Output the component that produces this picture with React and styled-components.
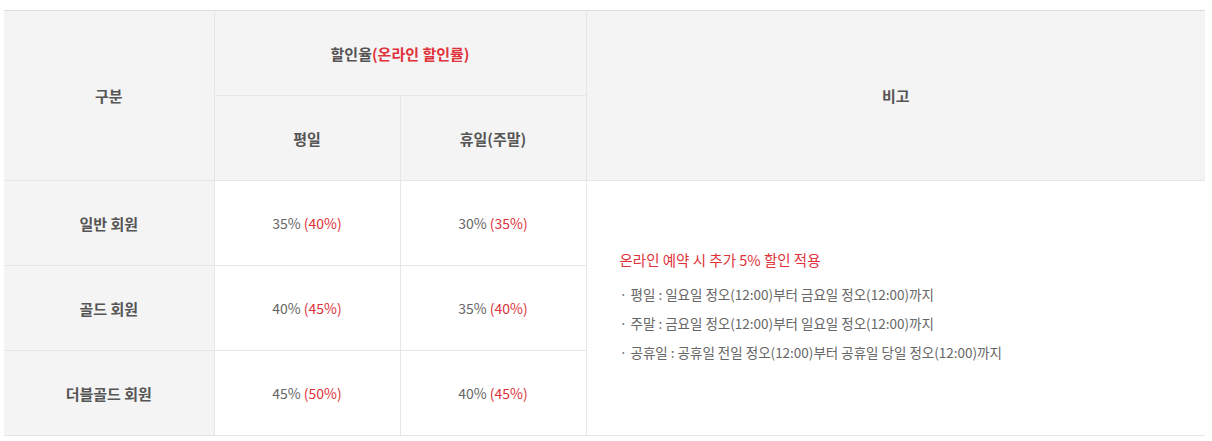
import React from 'react';
import styled, { createGlobalStyle } from 'styled-components';

const BORDER = '#e6e6e6';
const HEAD_BG = '#f4f4f4';
const RED = '#e0323a';
const ROW_HEIGHT = 85;

const GlobalStyle = createGlobalStyle`
  body {
    margin: 0;
    background: #fff;
    font-family: "Noto Sans CJK KR", "Noto Sans", sans-serif;
    color: #666;
  }
`;

const Wrap = styled.div`
  padding: 10px 7px 0 4px;
`;

const Table = styled.table`
  width: 100%;
  border-collapse: collapse;
  table-layout: fixed;
  border-top: 1px solid #dcdcdc;
  border-bottom: 1px solid ${BORDER};
`;

const Th = styled.th`
  height: ${ROW_HEIGHT - 1}px;
  padding: 0;
  background: ${HEAD_BG};
  border: 1px solid ${BORDER};
  border-top: 0;
  font-size: 15px;
  font-weight: 700;
  color: #555;
  text-align: center;
  vertical-align: middle;
  &:first-child { border-left: 0; }
  &:last-child { border-right: 0; }
`;

const Td = styled.td`
  height: ${ROW_HEIGHT - 1}px;
  padding: 0;
  border: 1px solid ${BORDER};
  background: ${(p) => (p.$head ? HEAD_BG : '#fff')};
  font-size: ${(p) => (p.$head ? 15 : 14)}px;
  font-weight: ${(p) => (p.$head ? 700 : 400)};
  color: ${(p) => (p.$head ? '#555' : '#666')};
  text-align: center;
  vertical-align: middle;
  &:first-child { border-left: 0; }
  &:last-child { border-right: 0; }
`;

const NoteCell = styled.td`
  padding: 0 0 0 33px;
  border: 1px solid ${BORDER};
  border-right: 0;
  text-align: left;
  vertical-align: middle;
`;

const Red = styled.span`
  color: ${RED};
`;

const NoteTitle = styled.p`
  margin: 0 0 10px;
  font-size: 14.5px;
  color: ${RED};
`;

const NoteList = styled.ul`
  list-style: none;
  margin: 0;
  padding: 0;
`;

const NoteItem = styled.li`
  position: relative;
  padding-left: 11px;
  font-size: 13.5px;
  line-height: 29px;
  color: #666;
  &::before {
    content: '·';
    position: absolute;
    left: 0;
    top: 0;
    color: #777;
  }
`;

const rows = [
  { name: '일반 회원', weekday: ['35%', '40%'], holiday: ['30%', '35%'] },
  { name: '골드 회원', weekday: ['40%', '45%'], holiday: ['35%', '40%'] },
  { name: '더블골드 회원', weekday: ['45%', '50%'], holiday: ['40%', '45%'] },
];

const notes = [
  '평일 : 일요일 정오(12:00)부터 금요일 정오(12:00)까지',
  '주말 : 금요일 정오(12:00)부터 일요일 정오(12:00)까지',
  '공휴일 : 공휴일 전일 정오(12:00)부터 공휴일 당일 정오(12:00)까지',
];

const Rate = ({ value }) => (
  <>
    {value[0]} <Red>({value[1]})</Red>
  </>
);

export default function App() {
  return (
    <Wrap>
      <GlobalStyle />
      <Table>
        <colgroup>
          <col style={{ width: 210 }} />
          <col style={{ width: 186 }} />
          <col style={{ width: 186 }} />
          <col />
        </colgroup>
        <thead>
          <tr>
            <Th rowSpan={2}>구분</Th>
            <Th colSpan={2}>
              할인율<Red>(온라인 할인률)</Red>
            </Th>
            <Th rowSpan={2}>비고</Th>
          </tr>
          <tr>
            <Th>평일</Th>
            <Th>휴일(주말)</Th>
          </tr>
        </thead>
        <tbody>
          {rows.map((row, i) => (
            <tr key={row.name}>
              <Td $head>{row.name}</Td>
              <Td>
                <Rate value={row.weekday} />
              </Td>
              <Td>
                <Rate value={row.holiday} />
              </Td>
              {i === 0 && (
                <NoteCell rowSpan={3}>
                  <NoteTitle>온라인 예약 시 추가 5% 할인 적용</NoteTitle>
                  <NoteList>
                    {notes.map((n) => (
                      <NoteItem key={n}>{n}</NoteItem>
                    ))}
                  </NoteList>
                </NoteCell>
              )}
            </tr>
          ))}
        </tbody>
      </Table>
    </Wrap>
  );
}
